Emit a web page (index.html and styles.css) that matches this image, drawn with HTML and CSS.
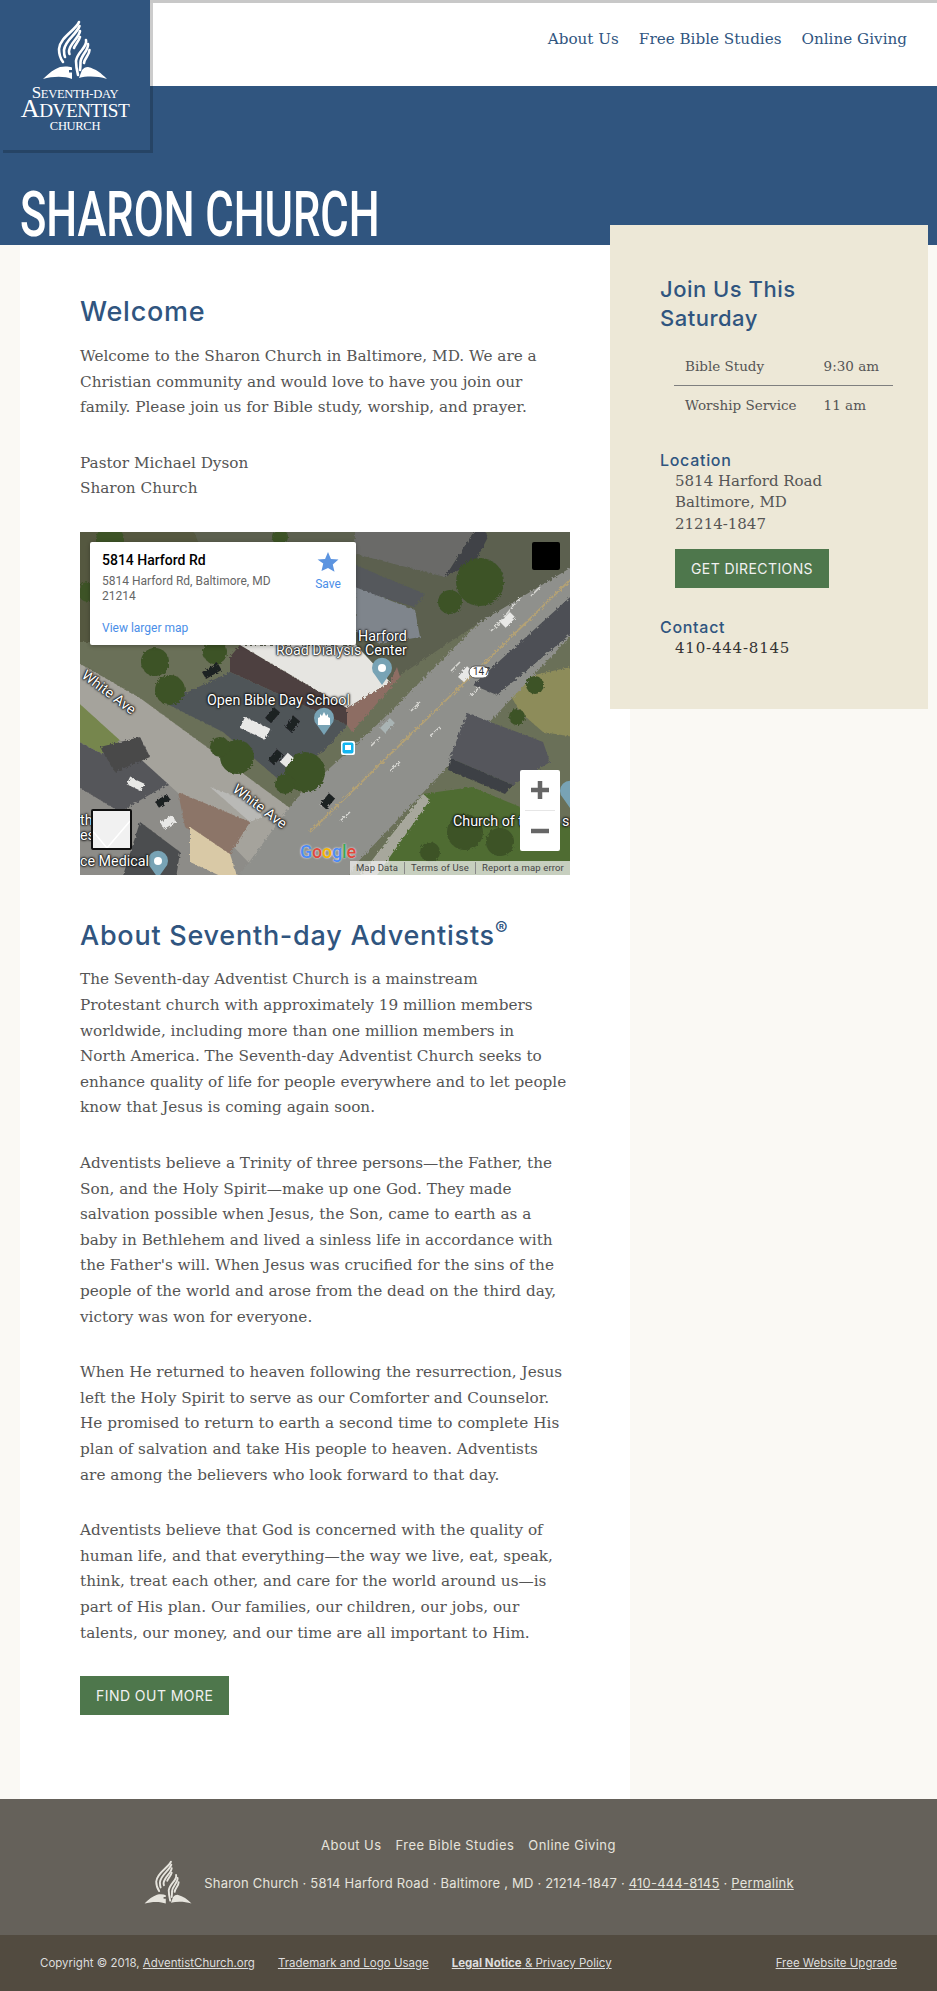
FILE: index.html
```html
<!DOCTYPE html>
<html>
<head>
<meta charset="utf-8">
<title>Sharon Church</title>
<link rel="stylesheet" href="styles.css">
</head>
<body>
<header class="top">
    <a class="logo">
        <svg class="logo_mark" viewBox="0 0 68 62"><use href="#Mark"></use></svg>
        <span class="logo_small">S<small>EVENTH-DAY</small></span>
        <span class="logo_big">A<small>DVENTIST</small></span>
        <span class="logo_church">CHURCH</span>
    </a>
    <nav class="top_nav">
        <a>About Us</a>
        <a>Free Bible Studies</a>
        <a>Online Giving</a>
    </nav>
</header>
<div class="band">
    <h1>SHARON CHURCH</h1>
</div>
<div class="page">
    <main class="content">
        <h2>Welcome</h2>
        <p>Welcome to the Sharon Church in Baltimore, MD. We are a<br>Christian community and would love to have you join our<br>family. Please join us for Bible study, worship, and prayer.</p>
        <p>Pastor Michael Dyson<br>Sharon Church</p>
        <div class="map">
            <svg class="map_photo" viewBox="0 0 490 343" preserveAspectRatio="none">
                <defs>
                    <filter id="Grain" x="0" y="0" width="100%" height="100%">
                        <feTurbulence type="fractalNoise" baseFrequency="0.4" numOctaves="2" seed="4" result="n"/>
                        <feDisplacementMap in="SourceGraphic" in2="n" scale="4"/>
                        <feGaussianBlur stdDeviation="0.6"/>
                    </filter>
                </defs>
                <rect width="490" height="343" fill="#6b7058"/>
                <g filter="url(#Grain)">
                    <rect x="-10" y="-10" width="510" height="363" fill="#6b7058"/>
                    <!-- lots and yards -->
                    <polygon points="-10,-10 170,-10 150,60 60,110 -10,110" fill="#54583f"/>
                    <polygon points="-10,163 60,205 190,290 230,353 -10,353" fill="#8d8c88"/>
                    <polygon points="-10,165 50,200 22,222 -10,205" fill="#76864e"/>
                    <polygon points="-10,205 22,222 70,200 100,245 40,280 -10,250" fill="#55565a"/>
                    <polygon points="423,150 500,133 500,206 463,200 440,180" fill="#8d8c5a"/>
                    <polygon points="343,262 392,255 500,300 500,353 273,353" fill="#4f6c33"/>
                    <polygon points="273,353 343,262 350,268 290,353" fill="#a7a79c"/>
                    <!-- roads -->
                    <polygon points="-10,126 60,166 210,276 258,353 190,353 130,290 -10,163" fill="#a5a39c"/>
                    <polygon points="500,30 500,94 273,335 265,353 152,353 215,268 300,190 400,90" fill="#8f908c"/>
                    <polygon points="500,56 500,94 417,163 393,153" fill="#4d5054"/>
                    <path d="M490 48 L230 300" stroke="#b3a175" stroke-width="2" fill="none"/>
                    <path d="M300 205l-9 9M340 170l-9 9M380 130l-9 9M420 90l-9 9M460 55l-9 9M250 265l-9 9" stroke="#d8d8d4" stroke-width="1.500"/>
                    <path d="M470 30L420 90M320 230l-10 9M360 195l-10 9M400 155l-10 9M270 280l-10 9" stroke="#d8d8d4" stroke-width="1.500"/>
                    <polygon points="110,-10 500,-10 500,30 400,90 310,150 276,113 160,113" fill="#5b6050"/>
                    <!-- buildings -->
                    <polygon points="275,-10 400,-10 365,45 275,22" fill="#6a6a68"/>
                    <polygon points="400,-10 408,5 395,30 365,45" fill="#3f4246"/>
                    <polygon points="268,30 345,62 335,75 268,55" fill="#55585c"/>
                    <polygon points="275,55 335,78 340,105 300,112 276,100" fill="#7f858c"/>
                    <polygon points="150,125 160,113 267,176 267,193 150,140" fill="#4d4040"/>
                    <polygon points="160,113 276,113 310,150 267,176" fill="#e6e5e1"/>
                    <polygon points="267,176 310,150 317,135 320,145 272,200 267,193" fill="#8d6d64"/>
                    <polygon points="85,171 150,140 267,193 243,220 197,246 143,200" fill="#505459"/>
                    <polygon points="387,181 463,210 470,230 433,253 370,226" fill="#54565c"/>
                    <polygon points="370,226 433,253 425,262 368,238" fill="#3e4145"/>
                    <polygon points="98,260 170,290 150,322 105,295" fill="#8c7568"/>
                    <polygon points="130,255 175,272 182,285 170,290" fill="#b9b9b6"/>
                    <polygon points="110,295 150,322 160,353 110,330" fill="#d9c9a6"/>
                    <polygon points="60,290 100,320 95,353 40,353" fill="#4b4d4f"/>
                    <polygon points="20,215 60,205 70,225 35,240" fill="#4a4a4a"/>
                    <!-- trees -->
                    <g fill="#3d5228">
                        <circle cx="157" cy="225" r="17"/><circle cx="140" cy="215" r="10"/>
                        <circle cx="225" cy="240" r="20"/><circle cx="205" cy="252" r="10"/>
                        <circle cx="400" cy="50" r="24"/><circle cx="370" cy="70" r="12"/>
                        <circle cx="75" cy="130" r="14"/><circle cx="90" cy="158" r="15"/><circle cx="135" cy="120" r="12"/>
                        <circle cx="437" cy="185" r="8"/><circle cx="455" cy="153" r="9"/>
                        <circle cx="385" cy="300" r="18"/><circle cx="420" cy="310" r="14"/><circle cx="350" cy="320" r="10"/>
                        <circle cx="30" cy="8" r="14"/><circle cx="200" cy="5" r="8"/><circle cx="8" cy="60" r="10"/>
                    </g>
                    <!-- cars -->
                    <g fill="#1f2124">
                        <rect x="122" y="140" width="18" height="8" transform="rotate(-30 122 140)"/>
                        <rect x="185" y="186" width="14" height="8" transform="rotate(-50 185 186)"/>
                        <rect x="205" y="195" width="14" height="8" transform="rotate(-50 205 195)"/>
                        <rect x="188" y="228" width="14" height="8" transform="rotate(-50 188 228)"/>
                        <rect x="240" y="272" width="14" height="8" transform="rotate(-50 240 272)"/>
                        <rect x="75" y="270" width="14" height="7" transform="rotate(-35 75 270)"/>
                    </g>
                    <g fill="#e8e8e6">
                        <rect x="165" y="185" width="28" height="12" transform="rotate(25 165 185)"/>
                        <rect x="378" y="145" width="14" height="8" transform="rotate(-50 378 145)"/>
                        <rect x="200" y="230" width="12" height="8" transform="rotate(-50 200 230)"/>
                        <rect x="50" y="245" width="16" height="8" transform="rotate(25 50 245)"/>
                        <rect x="80" y="290" width="14" height="8" transform="rotate(-30 80 290)"/>
                        <rect x="420" y="90" width="14" height="8" transform="rotate(-45 420 90)"/>
                    </g>
                    <rect x="300" y="196" width="14" height="7" fill="#a9b4b4" transform="rotate(-45 300 196)"/>
                </g>
                <!-- pins -->
                <g fill="#78a3b5">
                    <path d="M302 153l-7-10a10 10 0 1 1 14 0z"/>
                    <path d="M244 203l-7-10a10 10 0 1 1 14 0z"/>
                    <path d="M78 346l-7-10a10 10 0 1 1 14 0z"/>
                    <path d="M490 276l-7-10a10 10 0 1 1 14 0z"/>
                </g>
                <circle cx="302" cy="136" r="4" fill="#fff"/>
                <circle cx="78" cy="329" r="4" fill="#fff"/>
                <path d="M238 193v-7l2-1v-3l2 2 2-4 2 4 2-2v3l2 1v7z" fill="#fff"/>
                <rect x="261" y="209" width="14" height="14" rx="2" fill="#fff"/>
                <rect x="262.500" y="210.500" width="11" height="11" rx="2" fill="#12b5f0"/>
                <rect x="265" y="213" width="6" height="5" fill="#fff"/>
                <rect x="389" y="134" width="20" height="12" rx="6" fill="#fff" stroke="#555"/>
            </svg>
            <span class="map_label l1">Harford</span>
            <span class="map_label l2">Road Dialysis Center</span>
            <span class="map_label l3">Open Bible Day School</span>
            <span class="map_label l4">White Ave</span>
            <span class="map_label l5">White Ave</span>
            <span class="map_label l6">Church of t</span>
            <span class="map_label l7">ce Medical</span>
            <span class="map_label l8">ss</span>
            <span class="map_label l9">th</span>
            <span class="map_label l10">es</span>
            <span class="map_shield">147</span>
            <div class="map_card">
                <div class="map_card_text">
                    <b>5814 Harford Rd</b>
                    <span>5814 Harford Rd, Baltimore, MD 21214</span>
                    <a>View larger map</a>
                </div>
                <div class="map_save">
                    <svg viewBox="0 0 24 24"><path d="M12 1l3.200 7.600 8.200.7-6.200 5.400 1.900 8L12 18.500l-7.100 3.200 1.900-8L.6 9.300l8.200-.7z"/></svg>
                    Save
                </div>
            </div>
            <div class="map_full"></div>
            <div class="map_zoom">
                <svg viewBox="0 0 40 40"><path d="M11 20h18M20 11v18"/></svg>
                <i class="map_zoom_line"></i>
                <svg viewBox="0 0 40 40"><path d="M11 20h18"/></svg>
            </div>
            <div class="map_thumb">
                <svg viewBox="0 0 37 37"><path d="M-2 18L14 37M37 10L14 37" /></svg>
            </div>
            <span class="map_google"><i class="g1">G</i><i class="g2">o</i><i class="g3">o</i><i class="g1">g</i><i class="g4">l</i><i class="g2">e</i></span>
            <div class="map_terms"><span>Map Data</span><span>Terms of Use</span><span>Report a map error</span></div>
        </div>
        <h2>About Seventh-day Adventists<sup>®</sup></h2>
        <p>The Seventh-day Adventist Church is a mainstream<br>Protestant church with approximately 19 million members<br>worldwide, including more than one million members in<br>North America. The Seventh-day Adventist Church seeks to<br>enhance quality of life for people everywhere and to let people<br>know that Jesus is coming again soon.</p>
        <p>Adventists believe a Trinity of three persons—the Father, the<br>Son, and the Holy Spirit—make up one God. They made<br>salvation possible when Jesus, the Son, came to earth as a<br>baby in Bethlehem and lived a sinless life in accordance with<br>the Father's will. When Jesus was crucified for the sins of the<br>people of the world and arose from the dead on the third day,<br>victory was won for everyone.</p>
        <p>When He returned to heaven following the resurrection, Jesus<br>left the Holy Spirit to serve as our Comforter and Counselor.<br>He promised to return to earth a second time to complete His<br>plan of salvation and take His people to heaven. Adventists<br>are among the believers who look forward to that day.</p>
        <p>Adventists believe that God is concerned with the quality of<br>human life, and that everything—the way we live, eat, speak,<br>think, treat each other, and care for the world around us—is<br>part of His plan. Our families, our children, our jobs, our<br>talents, our money, and our time are all important to Him.</p>
        <a class="btn">FIND OUT MORE</a>
    </main>
    <aside class="side">
        <h3>Join Us This Saturday</h3>
        <table class="times">
            <tr><td>Bible Study</td><td>9:30 am</td></tr>
            <tr><td>Worship Service</td><td>11 am</td></tr>
        </table>
        <h4>Location</h4>
        <div class="side_text">5814 Harford Road<br>Baltimore, MD<br>21214-1847</div>
        <a class="btn btn_side">GET DIRECTIONS</a>
        <h4>Contact</h4>
        <div class="side_text side_phone">410-444-8145</div>
    </aside>
</div>
<footer class="foot">
    <nav class="foot_nav">
        <a>About Us</a>
        <a>Free Bible Studies</a>
        <a>Online Giving</a>
    </nav>
    <div class="foot_info">
        <svg class="foot_mark" viewBox="0 0 68 62"><use href="#Mark"></use></svg>
        <span>Sharon Church · 5814 Harford Road · Baltimore , MD · 21214-1847 · <u>410-444-8145</u> · <u>Permalink</u></span>
    </div>
</footer>
<div class="legal">
    <span>Copyright © 2018, <u>AdventistChurch.org</u></span>
    <u>Trademark and Logo Usage</u>
    <u><b>Legal Notice</b> &amp; Privacy Policy</u>
    <u class="legal_right">Free Website Upgrade</u>
</div>
<svg class="defs" width="0" height="0">
    <symbol id="Mark" viewBox="0 0 68 62">
        <g fill="none" stroke="currentColor" stroke-width="2.600" stroke-linecap="round">
            <path d="M38 2C35 10 19 17 18 29c0 5 1 9 4 13"/>
            <path d="M38.500 6C36 14 24 20 23 30c0 3 0 5 1 7"/>
            <path d="M39 11c-1 7-10 12-11 20 0 1 0 2 .5 3"/>
            <path d="M39 17c-1 4-5 8-6 11"/>
            <path d="M45 20c2 7-9 12-10 21 0 5 1 10 2 14"/>
            <path d="M47 24c1 6-7 11-7.500 18 0 3 0 5-.5 8"/>
            <path d="M48.500 30c0 5-5 8-5.500 13"/>
        </g>
        <path fill="currentColor" d="M2 59C8 53 13 49 19 47c5-1 9-.5 12 .5V50h-3v2.500h3V59C24 56 12 56 2 59zM66 59C60 53 55 49 47 47c-3 0-4 1-6 3l-3 8C46 56 56 56 66 59z"/>
    </symbol>
</svg>
</body>
</html>
```
FILE: styles.css
```css
html,body{
    margin:0;
    background-color:#faf9f4;
    font-family:"DejaVu Serif","Liberation Serif",serif;
    color:#555555;
}
a{
    color:inherit;
}
h1,h2,h3,h4,p{
    margin:0;
}
.defs{
    display:block;
}

.top{
    display:flex;
    height:86px;
    background-color:#ffffff;
}
.logo{
    flex:0 0 150px;
    height:150px;
    box-sizing:border-box;
    padding-top:20px;
    background-color:#30557f;
    box-shadow:3px 3px 0 rgba(0,0,0,.2);
    color:#ffffff;
    display:flex;
    flex-direction:column;
    align-items:center;
    font-family:"Liberation Serif",serif;
    line-height:1;
    position:relative;
    z-index:2;
}
.logo_mark{
    width:68px;
    height:62px;
    flex:none;
    margin-bottom:5px;
}
.logo small{
    font-size:.74em;
}
.logo_small{
    font-size:17px;
    letter-spacing:-.3px;
    line-height:12px;
}
.logo_big{
    font-size:26px;
    letter-spacing:-.5px;
    line-height:18px;
}
.logo_church{
    font-size:12.500px;
    line-height:13px;
    letter-spacing:-.3px;
}
.top_nav{
    flex:1;
    border-top:3px solid #c8c8c8;
    display:flex;
    justify-content:flex-end;
    align-items:center;
    gap:20px;
    padding:0 30px 12px 0;
    font-size:15.200px;
    color:#30557f;
}

.band{
    height:159px;
    background-color:#30557f;
    box-sizing:border-box;
    padding:99px 0 0 20px;
}
h1{
    font-family:"Roboto",sans-serif;
    font-weight:500;
    font-size:63px;
    line-height:60px;
    color:#ffffff;
    white-space:nowrap;
    transform:scaleX(.69);
    transform-origin:left top;
}

.page{
    display:flex;
    align-items:flex-start;
    padding-left:20px;
}
.content{
    width:490px;
    height:1554px;
    flex:none;
    padding:0 60px;
    background-color:#ffffff;
    font-size:15.250px;
    line-height:25.600px;
}
.content h2{
    font-family:"Inter","Open Sans",sans-serif;
    font-weight:500;
    font-size:27px;
    letter-spacing:.75px;
    line-height:34px;
    color:#30557f;
    margin:50px 0 15px;
}
.content h2 sup{
    font-size:.7em;
    line-height:0;
}
.content p{
    margin-bottom:30px;
    white-space:nowrap;
}
.content .map + h2{
    margin:44px 0 14.500px;
}

.map{
    position:relative;
    width:490px;
    height:343px;
    overflow:hidden;
    font-family:"Roboto",sans-serif;
    line-height:1.2;
}
.map_photo{
    display:block;
    width:100%;
    height:100%;
}
.map_label{
    position:absolute;
    color:#ffffff;
    font-size:14.300px;
    text-shadow:0 0 3px #111,0 0 2px #111,0 0 2px #111,0 0 1px #111;
    white-space:nowrap;
}
.l1{left:278px;top:96px;}
.l2{left:196px;top:110px;}
.l3{left:127px;top:160px;}
.l4{left:-3px;top:152px;transform:rotate(37deg);}
.l5{left:148px;top:266px;transform:rotate(37deg);}
.l6{left:373px;top:281px;}
.l7{left:0;top:321px;}
.l8{left:482px;top:281px;}
.l9{left:0;top:280px;}
.l10{left:0;top:295px;}
.map_shield{
    position:absolute;
    left:393px;
    top:134px;
    font-size:10px;
    color:#333333;
}
.map_card{
    position:absolute;
    left:10px;
    top:10px;
    width:266px;
    height:103px;
    box-sizing:border-box;
    padding:9px 0 0 12px;
    background-color:#ffffff;
    box-shadow:0 1px 4px rgba(0,0,0,.3);
    border-radius:2px;
    display:flex;
}
.map_card_text{
    width:198px;
    flex:none;
    display:flex;
    flex-direction:column;
    font-size:12px;
    line-height:15px;
    color:#666666;
}
.map_card_text span{
    max-width:185px;
}
.map_card_text b{
    font-size:14px;
    font-weight:500;
    line-height:18px;
    color:#000000;
    margin-bottom:5px;
}
.map_card_text a{
    color:#4a8ee8;
    margin-top:17px;
}
.map_save{
    flex:1;
    display:flex;
    flex-direction:column;
    align-items:center;
    font-size:12px;
    color:#4a8ee8;
}
.map_save svg{
    width:22px;
    height:22px;
    fill:#5c94e0;
    margin-bottom:4px;
}
.map_full{
    position:absolute;
    right:10px;
    top:10px;
    width:28px;
    height:28px;
    background-color:#000000;
    border-radius:2px;
}
.map_zoom{
    position:absolute;
    right:10px;
    top:238px;
    width:40px;
    height:81px;
    background-color:#ffffff;
    border-radius:2px;
}
.map_zoom svg{
    display:block;
    width:40px;
    height:40px;
    fill:none;
    stroke:#666666;
    stroke-width:4.500;
}
.map_zoom_line{
    display:block;
    height:1px;
    margin:0 5px;
    background-color:#e6e6e6;
}
.map_thumb{
    position:absolute;
    left:11px;
    top:277px;
    width:37px;
    height:37px;
    border:2px solid #111111;
    background-color:#f1f1f1;
    border-radius:2px;
}
.map_thumb svg{
    display:block;
    width:37px;
    height:37px;
    fill:none;
    stroke:#ffffff;
    stroke-width:1.500;
}
.map_google{
    position:absolute;
    left:220px;
    top:309px;
    font-size:18px;
    font-weight:500;
    letter-spacing:-.2px;
    text-shadow:0 0 2px #ffffff;
}
.map_google i{
    font-style:normal;
}
.g1{color:#4c8bf5;}
.g2{color:#e0483b;}
.g3{color:#f5b400;}
.g4{color:#3aa757;}
.map_terms{
    position:absolute;
    right:0;
    bottom:0;
    height:14px;
    display:flex;
    align-items:center;
    background-color:rgba(245,245,245,.72);
    font-size:9.500px;
    letter-spacing:.15px;
    color:#444444;
}
.map_terms span{
    padding:0 6px;
    border-left:1px solid #888888;
}
.map_terms span:first-child{
    border-left:none;
}

.btn{
    display:block;
    width:fit-content;
    background-color:#4e774c;
    color:#f1f1f1;
    font-family:"Inter","Open Sans",sans-serif;
    font-size:14px;
    letter-spacing:.45px;
    line-height:39px;
    padding:0 16px;
}
.content .btn{
    margin-top:1px;
}

.side{
    flex:none;
    width:318px;
    height:484px;
    box-sizing:border-box;
    margin:-20px 0 0 -20px;
    padding:50px 50px 0;
    background-color:#ede8d7;
    font-size:13.500px;
    position:relative;
}
.side h3{
    font-family:"Inter","Open Sans",sans-serif;
    font-weight:500;
    font-size:22px;
    letter-spacing:.5px;
    line-height:29px;
    color:#30557f;
    margin-bottom:14px;
}
.times{
    border-collapse:collapse;
    margin-left:14px;
    width:219px;
    line-height:20px;
}
.times td{
    padding:9px 11px;
}
.times tr + tr td{
    border-top:1px solid #7f7f7f;
}
.side h4{
    font-family:"Inter","Open Sans",sans-serif;
    font-weight:500;
    font-size:16px;
    letter-spacing:.7px;
    line-height:20px;
    color:#30557f;
    margin:26px 0 1px;
}
.side_text{
    margin-left:15px;
    font-size:15px;
    line-height:21.300px;
}
.side_phone{
    color:#333333;
    letter-spacing:.8px;
}
.btn_side{
    margin:14px 0 29px 15px;
    letter-spacing:.4px;
}

.foot{
    height:136px;
    box-sizing:border-box;
    padding-top:36px;
    background-color:#65615a;
    color:#e6e4dd;
    font-family:"Inter","Open Sans",sans-serif;
    font-size:13px;
}
.foot_nav{
    display:flex;
    justify-content:center;
    gap:14px;
    line-height:20px;
    letter-spacing:.45px;
}
.foot_info{
    display:flex;
    justify-content:center;
    align-items:center;
    gap:11px;
    margin-top:5px;
    letter-spacing:.2px;
}
.foot_mark{
    width:50px;
    height:46px;
}

.legal{
    height:56px;
    background-color:#524b40;
    color:#dddddd;
    font-family:"Inter","Open Sans",sans-serif;
    font-size:11.500px;
    display:flex;
    align-items:center;
    gap:23px;
    padding:0 40px;
}
.legal_right{
    margin-left:auto;
}
```
